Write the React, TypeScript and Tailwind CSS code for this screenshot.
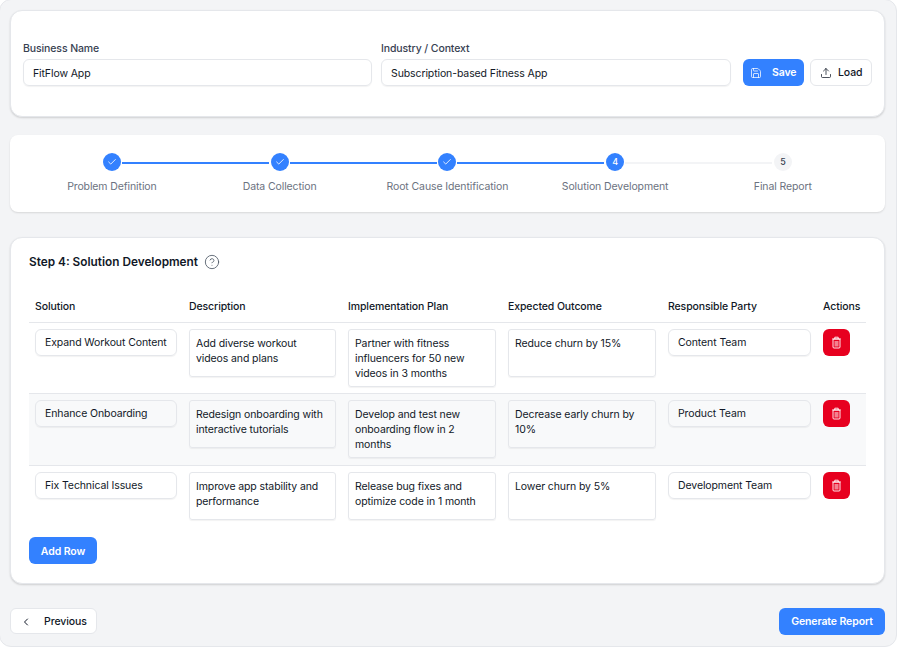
import { Check, ChevronLeft, CircleHelp, Save, Upload } from "lucide-react";

const rows = [
  ["Expand Workout Content", "Add diverse workout videos and plans", "Partner with fitness influencers for 50 new videos in 3 months", "Reduce churn by 15%", "Content Team"],
  ["Enhance Onboarding", "Redesign onboarding with interactive tutorials", "Develop and test new onboarding flow in 2 months", "Decrease early churn by 10%", "Product Team"],
  ["Fix Technical Issues", "Improve app stability and performance", "Release bug fixes and optimize code in 1 month", "Lower churn by 5%", "Development Team"],
];
const steps = ["Problem Definition", "Data Collection", "Root Cause Identification", "Solution Development", "Final Report"];

function TrashIcon() {
  return (
    <svg width="11" height="13" viewBox="0 0 11 13" fill="none" stroke="currentColor" strokeWidth="0.9">
      <path d="M1 3h9" />
      <path d="M3.8 3V1.2h3.4V3" />
      <rect x="2" y="3" width="7" height="9" rx="1" />
      <rect x="3.5" y="5" width="4" height="5.5" fill="currentColor" stroke="none" opacity="0.5" />
    </svg>
  );
}

export default function App() {
  return (
    <div className="w-[898px] h-[647px] overflow-hidden bg-white font-['Inter',sans-serif] text-[10.5px] tracking-[-0.01em] text-[#111827]">
      <div className="w-[898px] h-[648px] bg-[#f3f4f6] border border-[#e5e7eb] rounded-[12px] -mt-px -ml-px pl-[10px] pr-[11px] pt-[10px] flex flex-col">
        <section className="h-[107px] bg-white rounded-[12px] border border-[#e5e7eb] shadow-[0_1px_2px_rgba(0,0,0,0.15)] px-[12px] flex items-end pb-[30px]">
          <div className="w-[349px] mr-[9px]">
            <label className="block text-[#374151] font-medium mt-[1px] mb-[3px] leading-[14px]">Business Name</label>
            <div className="h-[27px] border border-[#e5e7eb] rounded-[6px] px-[9px] pt-[2px] flex items-center shadow-[0_1px_1px_rgba(0,0,0,0.05)]">FitFlow App</div>
          </div>
          <div className="w-[350px] mr-[12px]">
            <label className="block text-[#374151] font-medium mt-[1px] mb-[3px] leading-[14px]">Industry / Context</label>
            <div className="h-[27px] border border-[#e5e7eb] rounded-[6px] px-[9px] pt-[2px] flex items-center shadow-[0_1px_1px_rgba(0,0,0,0.05)]">Subscription-based Fitness App</div>
          </div>
          <button className="w-[61px] h-[27px] mr-[6px] bg-[#3381ff] rounded-[6px] text-white font-semibold flex items-center pl-[7px] gap-[10px]">
            <Save size={12} strokeWidth={1.5} />Save
          </button>
          <button className="w-[62px] h-[27px] bg-white border border-[#e5e7eb] rounded-[6px] font-medium flex items-center pl-[9px] gap-[6px]">
            <Upload size={12} strokeWidth={1.5} />Load
          </button>
        </section>

        <section className="mt-[18px] h-[77px] bg-white rounded-[8px] shadow-[0_1px_2px_rgba(0,0,0,0.12)] flex px-[18px] pt-[18px]">
          {steps.map((s, i) => (
            <div key={s} className="relative w-[167.75px] flex flex-col items-center">
              {i < 4 && (
                <div className={`absolute top-[9px] left-[calc(50%+10px)] w-[147px] h-[2px] ${i < 3 ? "bg-[#3381ff]" : "bg-[#f3f4f6]"}`} />
              )}
              <div className={`w-[18px] h-[18px] rounded-full flex items-center justify-center text-[9px] font-medium ${i < 4 ? "bg-[#3381ff] text-white" : "bg-[#f3f4f6] text-[#374151]"}`}>
                {i < 3 ? <Check size={10} strokeWidth={2} /> : i + 1}
              </div>
              <div className="mt-[9px] text-[#6b7280] leading-[14px] whitespace-nowrap">{s}</div>
            </div>
          ))}
        </section>

        <section className="mt-[25px] h-[347px] bg-white rounded-[12px] border border-[#e5e7eb] shadow-[0_1px_2px_rgba(0,0,0,0.15)] pl-[18px] pt-[15px]">
          <h2 className="flex items-center gap-[6px] text-[11.8px] tracking-normal font-semibold leading-[18px]">
            Step 4: Solution Development
            <CircleHelp size={16} strokeWidth={1.25} className="text-[#4b5563]" />
          </h2>
          <table className="mt-[21px] w-[837px] table-fixed border-collapse">
            <colgroup>
              <col className="w-[154px]" /><col className="w-[159px]" /><col className="w-[160px]" /><col className="w-[160px]" /><col className="w-[155px]" /><col className="w-[49px]" />
            </colgroup>
            <thead>
              <tr className="border-b border-[#e5e7eb] h-[30px]">
                {["Solution", "Description", "Implementation Plan", "Expected Outcome", "Responsible Party", "Actions"].map((h) => (
                  <th key={h} className="text-left font-medium px-[6px] pt-[1px] whitespace-nowrap">{h}</th>
                ))}
              </tr>
            </thead>
            <tbody>
              {rows.map((r, i) => (
                <tr key={r[0]} className={`align-top ${i === 1 ? "bg-[#f8f9fa] h-[72px]" : ""} ${i === 0 ? "h-[71px]" : ""} ${i < 2 ? "border-b border-[#e5e7eb]" : ""} ${i === 2 ? "h-[64px]" : ""}`}>
                  <td className="px-[6px] pt-[6px]">
                    <div className="h-[27px] border border-[#e5e7eb] rounded-[6px] px-[9px] pt-[2px] flex items-center whitespace-nowrap shadow-[0_1px_1px_rgba(0,0,0,0.05)]">{r[0]}</div>
                  </td>
                  {[1, 2, 3].map((k) => (
                    <td key={k} className="px-[6px] pt-[6px]">
                      <div className={`border border-[#e5e7eb] rounded-[3px] px-[6px] py-[6px] leading-[15px] shadow-[0_1px_1px_rgba(0,0,0,0.05)] ${i < 2 && k === 2 ? "h-[58px]" : "h-[48px]"}`}>{r[k]}</div>
                    </td>
                  ))}
                  <td className="px-[6px] pt-[6px]">
                    <div className="h-[27px] border border-[#e5e7eb] rounded-[6px] px-[9px] pt-[2px] flex items-center whitespace-nowrap shadow-[0_1px_1px_rgba(0,0,0,0.05)]">{r[4]}</div>
                  </td>
                  <td className="px-[6px] pt-[6px]">
                    <button className="w-[27px] h-[27px] bg-[#e7001f] rounded-[6px] text-white flex items-center justify-center">
                      <TrashIcon />
                    </button>
                  </td>
                </tr>
              ))}
            </tbody>
          </table>
          <button className="mt-[8px] w-[68px] h-[27px] pt-[2px] bg-[#3381ff] rounded-[6px] text-white font-semibold">Add Row</button>
        </section>

        <footer className="mt-[24px] flex justify-between items-start">
          <button className="w-[87px] h-[26px] pt-[1px] bg-white border border-[#e5e7eb] rounded-[6px] font-medium flex items-center pl-[9px] gap-[12px]">
            <ChevronLeft size={12} strokeWidth={2} />Previous
          </button>
          <button className="w-[106px] h-[27px] pt-[1px] bg-[#3381ff] rounded-[6px] text-white font-semibold">Generate Report</button>
        </footer>
      </div>
    </div>
  );
}
